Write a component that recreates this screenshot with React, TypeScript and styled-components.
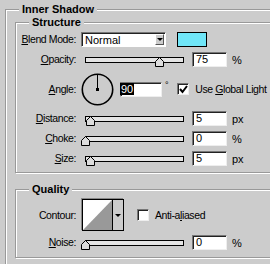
import * as React from "react";
import styled, { createGlobalStyle } from "styled-components";

const GlobalStyle = createGlobalStyle`
  html, body {
    margin: 0;
    padding: 0;
    overflow: hidden;
    background: #cccccc;
  }
  body {
    font-family: "Liberation Sans", Arial, sans-serif;
    font-size: 10.5px;
    letter-spacing: -0.4px;
    color: #000;
  }
`;

const Page = styled.div`
  width: 330px;
  padding: 3px 0 0 5px;
`;

const Group = styled.fieldset<{ $outer?: boolean; $top?: number; $pb?: number }>`
  margin: ${p => (p.$top ?? 0)}px 0 0 0;
  min-width: 0;
  border: 1px solid #999999;
  box-shadow: inset 1px 1px 0 #ffffff, 1px 1px 0 #ffffff;
  padding: ${p => (p.$outer ? "0 0 40px 9px" : `3px 0 ${p.$pb ?? 6}px 0`)};
  display: flex;
  flex-direction: column;
  gap: ${p => (p.$outer ? "0" : "5px")};
`;

const Legend = styled.legend<{ $indent: number }>`
  margin-left: ${p => p.$indent}px;
  padding: 0 3px;
  background: #cccccc;
  font-weight: bold;
  font-size: 11px;
  letter-spacing: 0;
  line-height: 13px;
`;

const Row = styled.div<{ $h?: number }>`
  display: flex;
  align-items: center;
  height: ${p => p.$h ?? 15}px;
`;

const Label = styled.div`
  flex: none;
  width: 60px;
  margin-right: 5px;
  text-align: right;
  white-space: nowrap;
  line-height: 13px;
`;

const Key = styled.span`
  text-decoration: underline;
  text-underline-offset: 1px;
`;

const Select = styled.div`
  box-sizing: border-box;
  width: 85px;
  height: 15px;
  display: flex;
  align-items: center;
  justify-content: space-between;
  background: #fff;
  border: 1px solid;
  border-color: #777 #fff #fff #777;
  box-shadow: inset 1px 1px 0 #222;
  padding: 0 1px 0 3px;
  font-size: 11px;
  letter-spacing: 0;
`;

const DropButton = styled.div`
  box-sizing: border-box;
  width: 9px;
  height: 11px;
  background: #cccccc;
  border: 1px solid;
  border-color: #fff #555 #555 #fff;
  display: flex;
  align-items: center;
  justify-content: center;
`;

const Arrow = styled.div`
  width: 0;
  height: 0;
  border-left: 3px solid transparent;
  border-right: 3px solid transparent;
  border-top: 3px solid #000;
`;

const Swatch = styled.div`
  box-sizing: border-box;
  width: 30px;
  height: 15px;
  margin-left: 11px;
  border: 1px solid #000;
  background: #70e6f8;
`;

const Slider = styled.div`
  position: relative;
  flex: none;
  width: 107px;
  height: 15px;
  margin-right: 4px;
`;

const Track = styled.div`
  box-sizing: border-box;
  margin: 5px 0 0 4px;
  width: 99px;
  height: 6px;
  border: 1px solid #000;
  background: #e4e4e4;
`;

const Thumb = styled.svg`
  position: absolute;
  top: 5px;
`;

const NumBox = styled.div<{ $w?: number }>`
  box-sizing: border-box;
  flex: none;
  width: ${p => p.$w ?? 35}px;
  height: 15px;
  background: #fff;
  border: 1px solid;
  border-color: #777 #eee #eee #777;
  box-shadow: inset 1px 1px 0 #222;
  padding-left: 3px;
  font-size: 11px;
  letter-spacing: 0;
  line-height: 13px;
`;

const Selected = styled.span`
  display: inline-block;
  margin-left: -2px;
  padding: 0 1px;
  background: #000;
  color: #fff;
  line-height: 12px;
`;

const Unit = styled.span`
  margin-left: 5px;
  font-size: 11px;
  letter-spacing: 0;
`;

const Degree = styled.span`
  margin: 0 0 8px 3px;
  font-size: 9px;
`;

const Check = styled.div<{ $ml: number }>`
  box-sizing: border-box;
  flex: none;
  width: 12px;
  height: 12px;
  margin-left: ${p => p.$ml}px;
  margin-right: 6px;
  background: #fff;
  border: 1px solid;
  border-color: #777 #eee #eee #777;
  box-shadow: inset 1px 1px 0 #222;
  display: flex;
  align-items: center;
  justify-content: center;
`;

const CheckText = styled.span`
  white-space: nowrap;
`;

const Contour = styled.div`
  box-sizing: border-box;
  flex: none;
  width: 42px;
  height: 32px;
  margin-left: 1px;
  display: flex;
  border: 1px solid #000;
  box-shadow: -1px -1px 0 #888;
  background: #fff;
`;

const CurveArea = styled.svg`
  display: block;
  flex: 1;
`;

const ContourButton = styled.div`
  width: 10px;
  border-left: 1px solid #000;
  background: #cccccc;
  display: flex;
  align-items: center;
  justify-content: center;
`;

const SliderField: React.FC<{ value: number; max?: number }> = ({ value, max = 100 }) => (
  <Slider>
    <Track />
    <Thumb
      width="10"
      height="10"
      viewBox="0 0 10 10"
      style={{ left: Math.round(4 + (value / max) * 98 - 4) }}
    >
      <polygon points="0.5,4.5 4.5,0.5 8.5,4.5 8.5,9.5 0.5,9.5" fill="#dddddd" stroke="#000" />
    </Thumb>
  </Slider>
);

const AngleDial: React.FC = () => (
  <svg width="33" height="33" viewBox="0 0 33 33" style={{ flex: "none" }}>
    <circle cx="16.5" cy="16.5" r="15.2" fill="none" stroke="#000" strokeWidth="1.6" />
    <line x1="16.5" y1="16.5" x2="16.5" y2="1.5" stroke="#000" strokeWidth="1" />
    <rect x="15" y="15" width="3" height="3" fill="#000" />
  </svg>
);

const Tick: React.FC = () => (
  <svg width="9" height="9" viewBox="0 0 9 9">
    <polyline points="1,4 3.5,7 8,1" fill="none" stroke="#000" strokeWidth="2" />
  </svg>
);

const SliderRow: React.FC<{ label: React.ReactNode; value: number; unit: string }> = ({
  label,
  value,
  unit,
}) => (
  <Row>
    <Label>{label}</Label>
    <SliderField value={value} />
    <NumBox>{value}</NumBox>
    <Unit>{unit}</Unit>
  </Row>
);

export default function App() {
  return (
    <>
      <GlobalStyle />
      <Page>
        <Group $outer>
          <Legend $indent={4}>Inner Shadow</Legend>

          <Group $pb={6}>
            <Legend $indent={13}>Structure</Legend>
            <Row>
              <Label>
                <Key>B</Key>lend Mode:
              </Label>
              <Select>
                Normal
                <DropButton>
                  <Arrow />
                </DropButton>
              </Select>
              <Swatch />
            </Row>
            <SliderRow
              label={
                <>
                  <Key>O</Key>pacity:
                </>
              }
              value={75}
              unit="%"
            />
            <Row $h={34}>
              <Label>
                <Key>A</Key>ngle:
              </Label>
              <AngleDial />
              <NumBox $w={42} style={{ marginLeft: 6, paddingLeft: 1 }}>
                <Selected>90</Selected>
              </NumBox>
              <Degree>°</Degree>
              <Check $ml={9}>
                <Tick />
              </Check>
              <CheckText>
                Use <Key>G</Key>lobal Light
              </CheckText>
            </Row>
            <SliderRow
              label={
                <>
                  <Key>D</Key>istance:
                </>
              }
              value={5}
              unit="px"
            />
            <SliderRow
              label={
                <>
                  <Key>C</Key>hoke:
                </>
              }
              value={0}
              unit="%"
            />
            <SliderRow
              label={
                <>
                  <Key>S</Key>ize:
                </>
              }
              value={5}
              unit="px"
            />
          </Group>

          <Group $top={10} $pb={7}>
            <Legend $indent={13}>Quality</Legend>
            <Row $h={32} style={{ marginBottom: -1 }}>
              <Label>Contour:</Label>
              <Contour>
                <CurveArea viewBox="0 0 30 30" preserveAspectRatio="none">
                  <polygon points="0,30 30,0 30,30" fill="#999999" />
                </CurveArea>
                <ContourButton>
                  <Arrow />
                </ContourButton>
              </Contour>
              <Check $ml={13} />
              <CheckText>
                Anti-a<Key>l</Key>iased
              </CheckText>
            </Row>
            <SliderRow
              label={
                <>
                  <Key>N</Key>oise:
                </>
              }
              value={0}
              unit="%"
            />
          </Group>
        </Group>
      </Page>
    </>
  );
}
